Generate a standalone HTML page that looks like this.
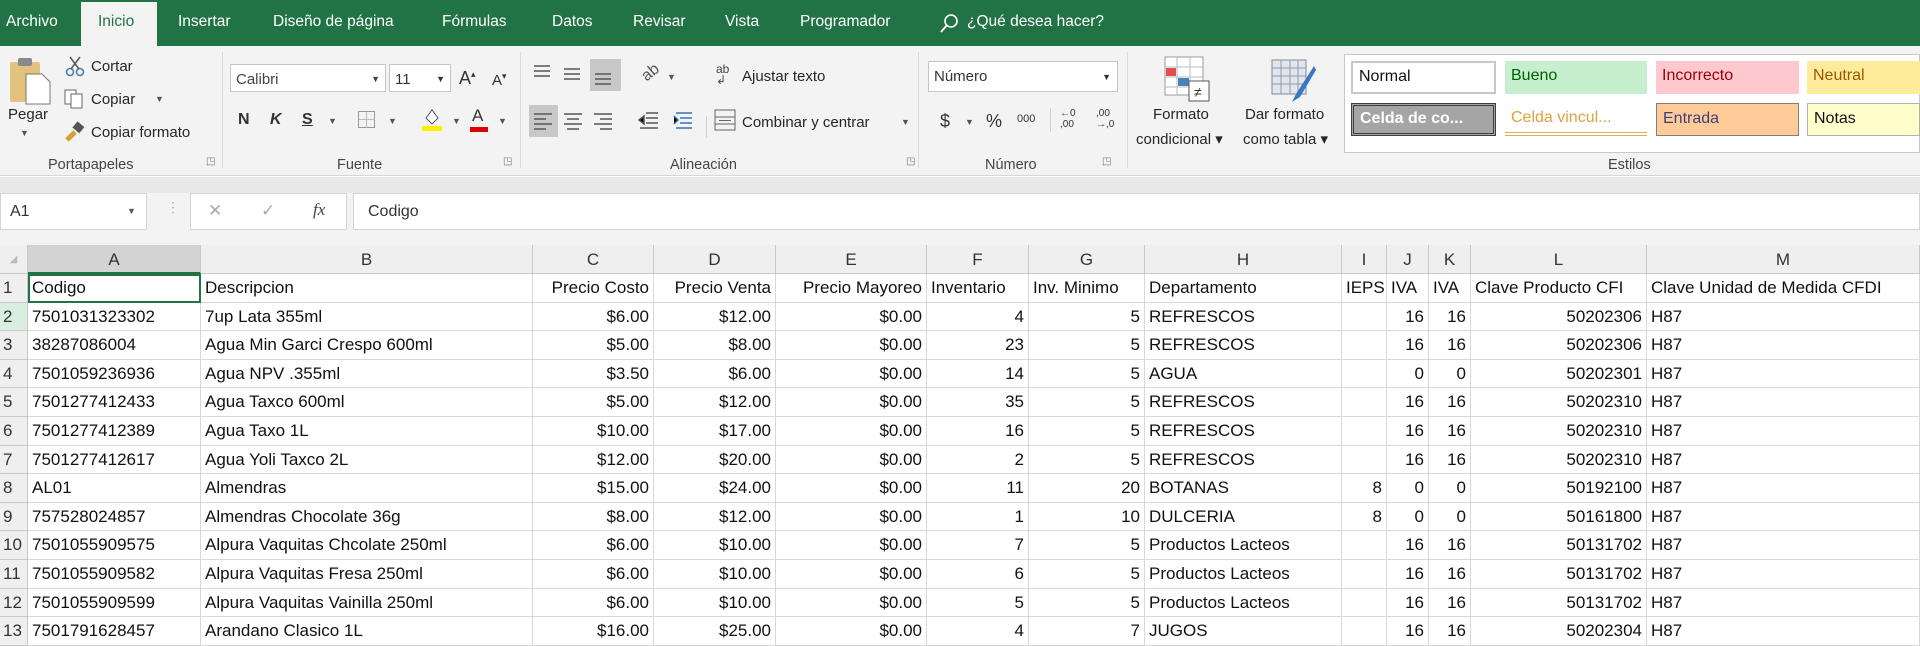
<!DOCTYPE html>
<html><head><meta charset="utf-8"><style>
*{box-sizing:border-box;margin:0;padding:0}
body{width:1920px;height:644px;overflow:hidden;background:#fff;font-family:"Liberation Sans",sans-serif;position:relative;color:#222}
.a{position:absolute;white-space:nowrap}
#tabs{position:absolute;left:0;top:0;width:1920px;height:46px;background:#217346}
#tabs .t{position:absolute;top:13px;color:#fff;font-size:15.5px}
#inicio{position:absolute;left:81px;top:2px;width:76px;height:44px;background:#f3f3f3}
#ribbon{position:absolute;left:0;top:46px;width:1920px;height:130px;background:#f3f3f3;border-bottom:1px solid #d6d6d6}
.r{font-size:15px;color:#262626}
.sep{position:absolute;top:52px;width:1px;height:116px;background:#dadada}
.gl{position:absolute;top:157px;font-size:14.5px;color:#444}
.box{position:absolute;background:#fff;border:1px solid #c6c6c6;font-size:15px;padding:6px 5px;color:#333}
.sty{position:absolute;height:33px;font-size:16px;padding:6px 6px}
#band{position:absolute;left:0;top:177px;width:1920px;height:16px;background:#e8e8e8}
#fbar{position:absolute;left:0;top:193px;width:1920px;height:52px;background:#f3f3f3}
.fb{position:absolute;top:0;height:37px;background:#fff;border:1px solid #d4d4d4}
#grid{position:absolute;left:0;top:245px;display:grid;grid-template-columns:28px 173px 332px 121px 122px 151px 102px 116px 197px 45px 42px 42px 176px 273px;grid-template-rows:29px repeat(13,28.6px)}
#grid div{border-right:1px solid #d8d8d8;border-bottom:1px solid #d8d8d8;font-size:17px;padding:4px 4px 0 4px;white-space:nowrap;overflow:hidden;color:#111;line-height:20px}
#grid .h{background:#efefef;text-align:center;color:#333;border-color:#c8c8c8;padding-top:5px}
#grid .n{background:#efefef;text-align:left;color:#333;border-color:#c8c8c8;padding-left:3px}
#grid .R{text-align:right}
#grid .sel{background:#d3d3d3;border-bottom:2px solid #217346}
#grid .ns{background:#d8eedf}
</style></head><body>
<div id="tabs">
<div id="inicio"></div>
<span class="t" style="left:6px">Archivo</span>
<span class="t" style="left:98px;color:#217346">Inicio</span>
<span class="t" style="left:178px">Insertar</span>
<span class="t" style="left:273px">Diseño de página</span>
<span class="t" style="left:442px">Fórmulas</span>
<span class="t" style="left:552px">Datos</span>
<span class="t" style="left:633px">Revisar</span>
<span class="t" style="left:725px">Vista</span>
<span class="t" style="left:800px">Programador</span>
<svg class="a" style="left:938px;top:12px" width="22" height="22"><circle cx="13" cy="9" r="6" fill="none" stroke="#fff" stroke-width="1.6"/><line x1="9" y1="13" x2="3" y2="20" stroke="#fff" stroke-width="1.8"/></svg>
<span class="t" style="left:967px">¿Qué desea hacer?</span>
</div>
<div id="ribbon"></div>
<!-- Portapapeles -->
<svg class="a" style="left:8px;top:54px" width="44" height="52"><rect x="2" y="8" width="30" height="40" rx="2" fill="#e2c27d"/><rect x="10" y="4" width="14" height="8" rx="2" fill="#8a8a8a"/><path d="M18 20h16l8 8v22H18z" fill="#fff" stroke="#777"/></svg>
<span class="a r" style="left:8px;top:106px">Pegar</span><span class="a" style="left:20px;top:128px;font-size:9px;color:#555">▼</span>
<svg class="a" style="left:64px;top:55px" width="22" height="22"><circle cx="6" cy="17" r="3.5" fill="none" stroke="#4a7fb5" stroke-width="1.6"/><circle cx="16" cy="17" r="3.5" fill="none" stroke="#4a7fb5" stroke-width="1.6"/><path d="M7 14L16 2M15 14L6 2" stroke="#555" stroke-width="1.5"/></svg>
<span class="a r" style="left:91px;top:58px">Cortar</span>
<svg class="a" style="left:63px;top:88px" width="22" height="22"><rect x="2" y="2" width="11" height="14" fill="#fff" stroke="#666"/><rect x="8" y="6" width="11" height="14" fill="#fff" stroke="#666"/></svg>
<span class="a r" style="left:91px;top:91px">Copiar</span><span class="a" style="left:155px;top:94px;font-size:9px;color:#555">▼</span>
<svg class="a" style="left:64px;top:120px" width="22" height="22"><path d="M3 20l8-8" stroke="#d4a030" stroke-width="5"/><rect x="10" y="3" width="9" height="8" fill="#555" transform="rotate(40 14 7)"/></svg>
<span class="a r" style="left:91px;top:124px">Copiar formato</span>
<div class="gl" style="left:48px">Portapapeles</div>
<span class="a" style="left:206px;top:156px;font-size:10px;color:#777">◳</span>
<div class="sep" style="left:222px"></div>
<!-- Fuente -->
<div class="box" style="left:230px;top:64px;width:156px;height:28px;color:#444">Calibri<span style="position:absolute;right:5px;font-size:9px;top:9px">▼</span></div>
<div class="box" style="left:389px;top:64px;width:62px;height:28px">11<span style="position:absolute;right:5px;font-size:9px;top:9px">▼</span></div>
<span class="a" style="left:459px;top:68px;font-size:18px;color:#333">A<sup style="font-size:9px">▴</sup></span>
<span class="a" style="left:492px;top:71px;font-size:15px;color:#333">A<sup style="font-size:9px">▾</sup></span>
<span class="a" style="left:238px;top:111px;font-size:16px;font-weight:bold;color:#333">N</span>
<span class="a" style="left:270px;top:111px;font-size:16px;font-weight:bold;font-style:italic;color:#333">K</span>
<span class="a" style="left:302px;top:111px;font-size:16px;font-weight:bold;text-decoration:underline;color:#333">S</span>
<span class="a" style="left:328px;top:116px;font-size:9px;color:#555">▼</span>
<svg class="a" style="left:357px;top:110px" width="20" height="20"><rect x="1.5" y="1.5" width="16" height="16" fill="none" stroke="#999"/><path d="M9.5 2v16M2 9.5h16" stroke="#bbb"/></svg>
<span class="a" style="left:388px;top:116px;font-size:9px;color:#555">▼</span>
<svg class="a" style="left:420px;top:106px" width="24" height="26"><path d="M6 12l6-8 6 8-6 6z" fill="#fff" stroke="#555"/><rect x="2" y="20" width="20" height="5" fill="#ffef00"/></svg>
<span class="a" style="left:452px;top:116px;font-size:9px;color:#555">▼</span>
<span class="a" style="left:472px;top:106px;font-size:17px;color:#333">A</span><div class="a" style="left:470px;top:127px;width:18px;height:5px;background:#d00"></div>
<span class="a" style="left:498px;top:116px;font-size:9px;color:#555">▼</span>
<div class="gl" style="left:337px">Fuente</div>
<span class="a" style="left:503px;top:156px;font-size:10px;color:#777">◳</span>
<div class="sep" style="left:520px"></div>
<!-- Alineación -->
<div class="a" style="left:590px;top:59px;width:31px;height:32px;background:#c8c8c8"></div>
<div class="a" style="left:529px;top:105px;width:29px;height:32px;background:#c8c8c8"></div>
<svg class="a" style="left:532px;top:62px" width="90" height="26" stroke="#555" stroke-width="1.5"><path d="M2 4h16M2 9h16M2 14h16"/><path d="M32 7h16M32 12h16M32 17h16"/><path d="M63 12h16M63 17h16M63 22h16"/></svg>
<svg class="a" style="left:532px;top:111px" width="90" height="22" stroke="#555" stroke-width="1.5"><path d="M2 3h18M2 8h12M2 13h18M2 18h12"/><path d="M32 3h18M35 8h12M32 13h18M35 18h12"/><path d="M62 3h18M68 8h12M62 13h18M68 18h12"/></svg>
<span class="a" style="left:642px;top:64px;font-size:16px;color:#555;transform:rotate(-40deg)">ab</span><span class="a" style="left:667px;top:72px;font-size:9px;color:#555">▼</span>
<svg class="a" style="left:638px;top:110px" width="60" height="24" stroke="#555" stroke-width="1.5"><path d="M8 3h12M8 8h12M8 13h12M2 18h18M1 10l5-4v8z"/><path d="M38 3h16M42 8h12M42 13h12M38 18h16M36 6l4 4-4 4" stroke="#3a6fb0"/></svg>
<div class="a" style="left:706px;top:116px;width:1px;height:22px;background:#d0d0d0"></div>
<span class="a" style="left:716px;top:64px;font-size:12px;color:#444;line-height:11px">ab<br>↲</span>
<span class="a r" style="left:742px;top:68px">Ajustar texto</span>
<svg class="a" style="left:713px;top:108px" width="24" height="24"><rect x="2" y="2" width="20" height="20" fill="none" stroke="#666"/><path d="M2 9h20M2 16h20M6 12.5h12" stroke="#666"/></svg>
<span class="a r" style="left:742px;top:114px">Combinar y centrar</span><span class="a" style="left:901px;top:117px;font-size:9px;color:#555">▼</span>
<div class="gl" style="left:670px">Alineación</div>
<span class="a" style="left:906px;top:156px;font-size:10px;color:#777">◳</span>
<div class="sep" style="left:918px"></div>
<!-- Número -->
<div class="box" style="left:928px;top:61px;width:190px;height:31px">Número<span style="position:absolute;right:6px;font-size:9px;top:10px">▼</span></div>
<span class="a" style="left:940px;top:111px;font-size:18px;color:#333">$</span><span class="a" style="left:965px;top:117px;font-size:9px;color:#555">▼</span>
<span class="a" style="left:986px;top:111px;font-size:18px;color:#333">%</span>
<span class="a" style="left:1017px;top:113px;font-size:11px;color:#333">000</span>
<div class="a" style="left:1050px;top:108px;width:1px;height:24px;background:#d0d0d0"></div>
<span class="a" style="left:1060px;top:108px;font-size:10px;color:#333;line-height:11px">←0<br>,00</span>
<span class="a" style="left:1096px;top:108px;font-size:10px;color:#333;line-height:11px">,00<br>→,0</span>
<div class="gl" style="left:985px">Número</div>
<span class="a" style="left:1102px;top:156px;font-size:10px;color:#777">◳</span>
<div class="sep" style="left:1127px"></div>
<!-- Estilos -->
<svg class="a" style="left:1163px;top:55px" width="50" height="48"><rect x="2" y="2" width="38" height="38" fill="#fff" stroke="#999"/><path d="M2 12h38M2 22h38M2 32h38M14 2v38M27 2v38" stroke="#bbb"/><rect x="3" y="13" width="10" height="8" fill="#e05050"/><rect x="15" y="23" width="11" height="8" fill="#4a7fc0"/><rect x="26" y="26" width="20" height="20" fill="#fff" stroke="#555"/><text x="31" y="42" font-size="14" fill="#333" font-family="Liberation Sans">≠</text></svg>
<span class="a r" style="left:1153px;top:106px">Formato</span>
<span class="a r" style="left:1136px;top:130px">condicional ▾</span>
<svg class="a" style="left:1270px;top:58px" width="48" height="46"><rect x="2" y="2" width="34" height="34" fill="#dfe6f3" stroke="#888"/><path d="M2 10h34M2 18h34M2 26h34M11 2v34M20 2v34M28 2v34" stroke="#999"/><path d="M44 8L26 36l-4 8 8-5L46 12z" fill="#3a78c2"/></svg>
<span class="a r" style="left:1245px;top:106px">Dar formato</span>
<span class="a r" style="left:1243px;top:130px">como tabla ▾</span>
<div class="a" style="left:1344px;top:54px;width:576px;height:99px;background:#fff;border:1px solid #c8c8c8"></div>
<div class="sty" style="left:1351px;top:61px;width:145px;background:#fff;border:2px solid #c8c8c8;color:#111;padding-top:5px">Normal</div>
<div class="sty" style="left:1505px;top:61px;width:142px;background:#c6efce;color:#006100">Bueno</div>
<div class="sty" style="left:1656px;top:61px;width:143px;background:#ffc7ce;color:#9c0006">Incorrecto</div>
<div class="sty" style="left:1807px;top:61px;width:113px;background:#ffeb9c;color:#9c5700">Neutral</div>
<div class="sty" style="left:1351px;top:103px;width:145px;background:#a5a5a5;border:3px double #3f3f3f;color:#fff;font-weight:bold;padding-top:4px">Celda de co...</div>
<div class="sty" style="left:1505px;top:103px;width:142px;background:#fff;color:#e0a040;border-bottom:4px double #e0b050">Celda vincul...</div>
<div class="sty" style="left:1656px;top:103px;width:143px;background:#ffcc99;border:1px solid #7f7f7f;color:#3f3f76">Entrada</div>
<div class="sty" style="left:1807px;top:103px;width:113px;background:#ffffcc;border:1px solid #b2b2b2;color:#111">Notas</div>
<div class="gl" style="left:1608px">Estilos</div>
<div id="band"></div>
<div id="fbar">
<div class="fb" style="left:0;width:147px"><span class="a" style="left:9px;top:9px;font-size:16px;color:#333">A1</span><span class="a" style="left:126px;top:12px;font-size:9px;color:#555">▼</span></div>
<span class="a" style="left:166px;top:6px;font-size:14px;color:#aaa;letter-spacing:-1px">⋮</span>
<div class="fb" style="left:190px;width:157px"><span class="a" style="left:17px;top:7px;font-size:17px;color:#aaa">✕</span><span class="a" style="left:70px;top:7px;font-size:17px;color:#aaa">✓</span><span class="a" style="left:122px;top:6px;font-size:17px;font-style:italic;font-family:'Liberation Serif',serif;color:#444">fx</span></div>
<div class="fb" style="left:353px;width:1567px"><span class="a" style="left:14px;top:9px;font-size:16px;color:#333">Codigo</span></div>
</div>
<div id="grid">
<div class="h" style="font-size:10px;color:#bbb">◢</div><div class="h sel">A</div><div class="h">B</div><div class="h">C</div><div class="h">D</div><div class="h">E</div><div class="h">F</div><div class="h">G</div><div class="h">H</div><div class="h">I</div><div class="h">J</div><div class="h">K</div><div class="h">L</div><div class="h">M</div>
<div class="n">1</div><div style="outline:2px solid #217346;outline-offset:-2px">Codigo</div><div>Descripcion</div><div class="R">Precio Costo</div><div class="R">Precio Venta</div><div class="R">Precio Mayoreo</div><div>Inventario</div><div>Inv. Minimo</div><div>Departamento</div><div class="R">IEPS</div><div>IVA</div><div>IVA</div><div>Clave Producto CFI</div><div>Clave Unidad de Medida CFDI</div>
<div class="n ns">2</div><div>7501031323302</div><div>7up Lata 355ml</div><div class="R">$6.00</div><div class="R">$12.00</div><div class="R">$0.00</div><div class="R">4</div><div class="R">5</div><div>REFRESCOS</div><div></div><div class="R">16</div><div class="R">16</div><div class="R">50202306</div><div>H87</div>
<div class="n">3</div><div>38287086004</div><div>Agua Min Garci Crespo 600ml</div><div class="R">$5.00</div><div class="R">$8.00</div><div class="R">$0.00</div><div class="R">23</div><div class="R">5</div><div>REFRESCOS</div><div></div><div class="R">16</div><div class="R">16</div><div class="R">50202306</div><div>H87</div>
<div class="n">4</div><div>7501059236936</div><div>Agua NPV .355ml</div><div class="R">$3.50</div><div class="R">$6.00</div><div class="R">$0.00</div><div class="R">14</div><div class="R">5</div><div>AGUA</div><div></div><div class="R">0</div><div class="R">0</div><div class="R">50202301</div><div>H87</div>
<div class="n">5</div><div>7501277412433</div><div>Agua Taxco 600ml</div><div class="R">$5.00</div><div class="R">$12.00</div><div class="R">$0.00</div><div class="R">35</div><div class="R">5</div><div>REFRESCOS</div><div></div><div class="R">16</div><div class="R">16</div><div class="R">50202310</div><div>H87</div>
<div class="n">6</div><div>7501277412389</div><div>Agua Taxo 1L</div><div class="R">$10.00</div><div class="R">$17.00</div><div class="R">$0.00</div><div class="R">16</div><div class="R">5</div><div>REFRESCOS</div><div></div><div class="R">16</div><div class="R">16</div><div class="R">50202310</div><div>H87</div>
<div class="n">7</div><div>7501277412617</div><div>Agua Yoli Taxco 2L</div><div class="R">$12.00</div><div class="R">$20.00</div><div class="R">$0.00</div><div class="R">2</div><div class="R">5</div><div>REFRESCOS</div><div></div><div class="R">16</div><div class="R">16</div><div class="R">50202310</div><div>H87</div>
<div class="n">8</div><div>AL01</div><div>Almendras</div><div class="R">$15.00</div><div class="R">$24.00</div><div class="R">$0.00</div><div class="R">11</div><div class="R">20</div><div>BOTANAS</div><div class="R">8</div><div class="R">0</div><div class="R">0</div><div class="R">50192100</div><div>H87</div>
<div class="n">9</div><div>757528024857</div><div>Almendras Chocolate 36g</div><div class="R">$8.00</div><div class="R">$12.00</div><div class="R">$0.00</div><div class="R">1</div><div class="R">10</div><div>DULCERIA</div><div class="R">8</div><div class="R">0</div><div class="R">0</div><div class="R">50161800</div><div>H87</div>
<div class="n">10</div><div>7501055909575</div><div>Alpura Vaquitas Chcolate 250ml</div><div class="R">$6.00</div><div class="R">$10.00</div><div class="R">$0.00</div><div class="R">7</div><div class="R">5</div><div>Productos Lacteos</div><div></div><div class="R">16</div><div class="R">16</div><div class="R">50131702</div><div>H87</div>
<div class="n">11</div><div>7501055909582</div><div>Alpura Vaquitas Fresa 250ml</div><div class="R">$6.00</div><div class="R">$10.00</div><div class="R">$0.00</div><div class="R">6</div><div class="R">5</div><div>Productos Lacteos</div><div></div><div class="R">16</div><div class="R">16</div><div class="R">50131702</div><div>H87</div>
<div class="n">12</div><div>7501055909599</div><div>Alpura Vaquitas Vainilla 250ml</div><div class="R">$6.00</div><div class="R">$10.00</div><div class="R">$0.00</div><div class="R">5</div><div class="R">5</div><div>Productos Lacteos</div><div></div><div class="R">16</div><div class="R">16</div><div class="R">50131702</div><div>H87</div>
<div class="n">13</div><div>7501791628457</div><div>Arandano Clasico 1L</div><div class="R">$16.00</div><div class="R">$25.00</div><div class="R">$0.00</div><div class="R">4</div><div class="R">7</div><div>JUGOS</div><div></div><div class="R">16</div><div class="R">16</div><div class="R">50202304</div><div>H87</div>
</div>
</body></html>
